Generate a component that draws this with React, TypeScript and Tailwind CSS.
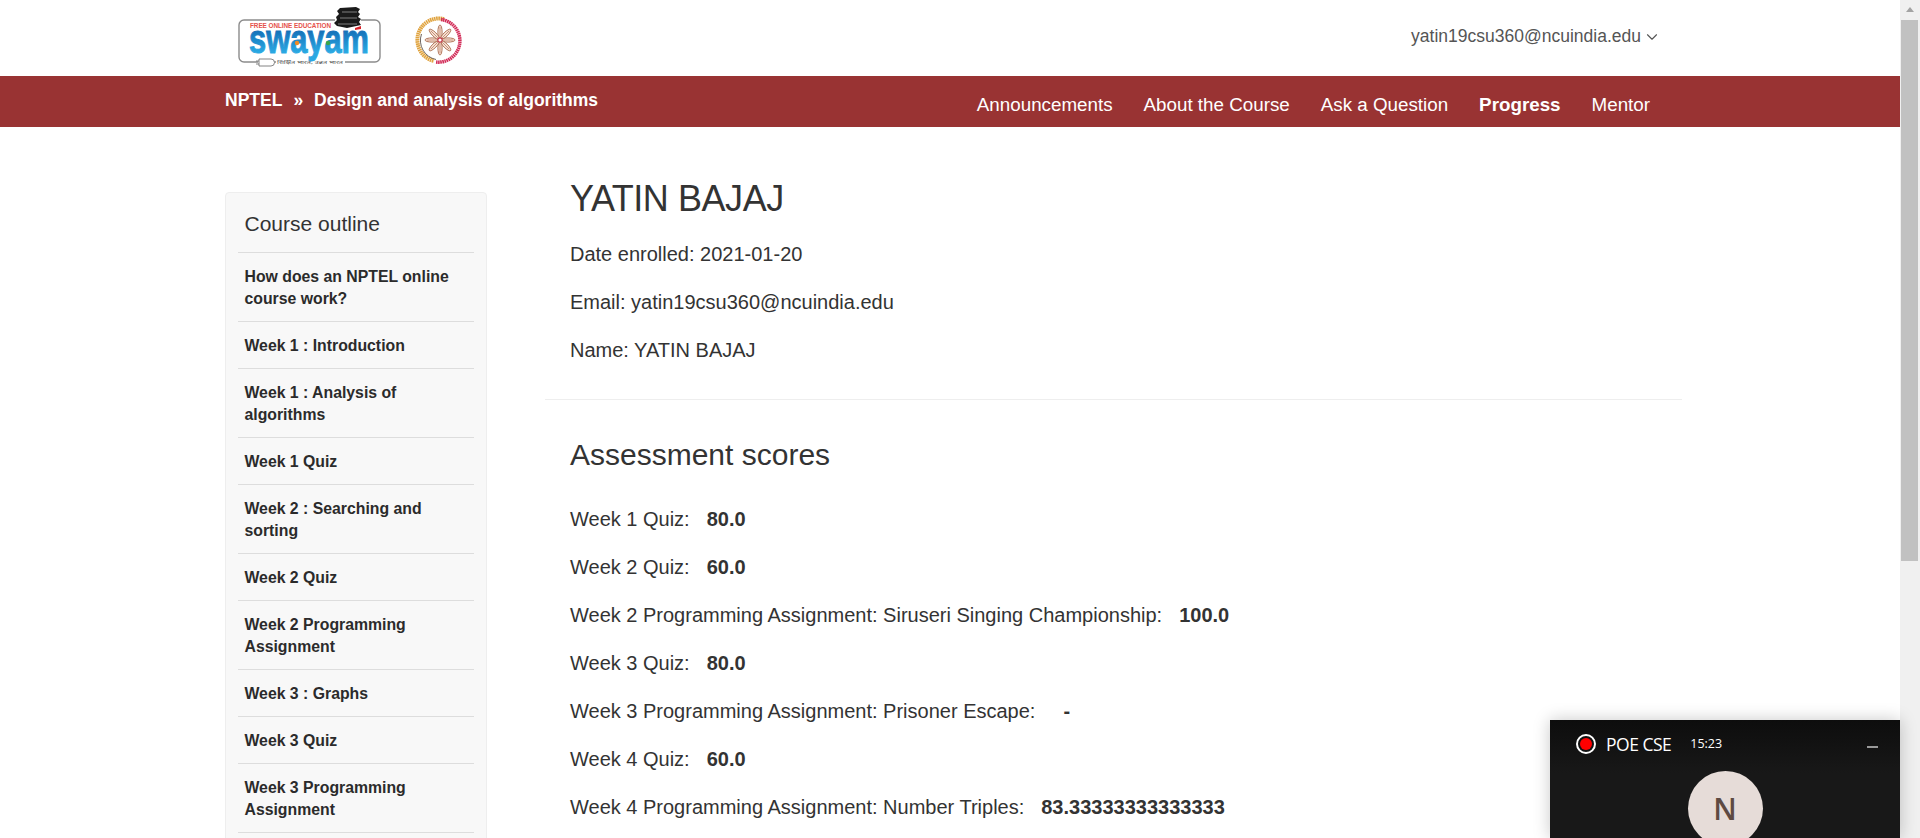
import React from "react";
import { ChevronDown } from "lucide-react";

const outline = [
  "How does an NPTEL online course work?",
  "Week 1 : Introduction",
  "Week 1 : Analysis of algorithms",
  "Week 1 Quiz",
  "Week 2 : Searching and sorting",
  "Week 2 Quiz",
  "Week 2 Programming Assignment",
  "Week 3 : Graphs",
  "Week 3 Quiz",
  "Week 3 Programming Assignment",
  "Week 4 : Weighted graphs",
];

const scores = [
  { name: "Week 1 Quiz:", score: "80.0" },
  { name: "Week 2 Quiz:", score: "60.0" },
  { name: "Week 2 Programming Assignment: Siruseri Singing Championship:", score: "100.0" },
  { name: "Week 3 Quiz:", score: "80.0" },
  { name: "Week 3 Programming Assignment: Prisoner Escape:", score: "-", wide: true },
  { name: "Week 4 Quiz:", score: "60.0" },
  { name: "Week 4 Programming Assignment: Number Triples:", score: "83.33333333333333" },
];

function SwayamLogo() {
  return (
    <svg width="146" height="66" viewBox="0 0 146 66" className="block">
      <defs>
        <linearGradient id="swayamBlue" x1="0" y1="0" x2="0" y2="1">
          <stop offset="0.2" stopColor="#0f62ae" />
          <stop offset="0.8" stopColor="#2aa8e2" />
        </linearGradient>
      </defs>
      <path d="M98 15H7a5 5 0 0 0-5 5v32a5 5 0 0 0 5 5h14M36 57h3M108 57h30a5 5 0 0 0 5-5V20a5 5 0 0 0-5-5h-14" fill="none" stroke="#8c8c8c" strokeWidth="1.4" />
      <path d="M22 54h12a3 3 0 0 1 0 7H22zM22 56h-3M22 59h-3" fill="#fff" stroke="#777" strokeWidth="0.9" />
      <path d="M103 3l16-1 4 2-2 3 2 2-2 3 3 2-2 3 2 3-14 3-10-2-3-3 3-3-1-3 3-3-2-3z" fill="#1a1a1a" />
      <path d="M105 7h15M103 13h17M101 19h19" stroke="#8a8a8a" strokeWidth="0.9" />
      <path d="M118 23l6-2v3l-6 1z" fill="#d8232a" />
      <text x="13" y="23" fontSize="6.4" fontWeight="700" fill="#e5524b" fontFamily="'Liberation Sans', sans-serif" textLength="81" lengthAdjust="spacing">FREE ONLINE EDUCATION</text>
      <text x="12" y="47.5" fontSize="40" fontWeight="700" fill="url(#swayamBlue)" stroke="url(#swayamBlue)" strokeWidth="1" fontFamily="'Liberation Sans', sans-serif" textLength="120" lengthAdjust="spacingAndGlyphs">swayam</text>
      <circle cx="60" cy="38" r="2.2" fill="#f08a24" />
      <circle cx="91" cy="38" r="2.2" fill="#3aa54a" />
      <text x="40" y="59" fontSize="5" fill="#555" fontFamily="'Noto Sans', 'Liberation Sans', sans-serif" textLength="66" lengthAdjust="spacingAndGlyphs">शिक्षित भारत, उन्नत भारत</text>
    </svg>
  );
}

function NptelSeal() {
  const petals = [0, 45, 90, 135, 180, 225, 270, 315];
  return (
    <svg width="50" height="50" viewBox="0 0 50 50" className="mt-[3px] block">
      <path d="M29 4A21.5 21.5 0 0 0 19 46" fill="none" stroke="#e0a33e" strokeWidth="4" strokeDasharray="1.6 0.5" />
      <path d="M6.5 19A19.5 19.5 0 0 0 21 44.5" fill="none" stroke="#4b4038" strokeWidth="0.8" />
      <path d="M26 4.5A21 21 0 0 1 21 47" fill="none" stroke="#d22c58" strokeWidth="3.5" strokeDasharray="1.6 0.5" />
      {petals.map((deg) => (
        <g key={deg} transform={`rotate(${deg} 25 25)`}>
          <ellipse cx="25" cy="17" rx="2.1" ry="7" fill="#f6e7d8" stroke="#a9684c" strokeWidth="0.9" />
          <path d="M25 12v10" stroke="#b5553f" strokeWidth="0.6" />
        </g>
      ))}
      <circle cx="25" cy="25" r="2.2" fill="#fff" stroke="#c23a4a" strokeWidth="1.2" />
    </svg>
  );
}

export default function App() {
  return (
    <div className="flex h-[838px] w-full overflow-hidden bg-white text-[#333] font-['Liberation_Sans',Arial,sans-serif]">
      <div className="relative w-[1900px] shrink-0">
        <header className="flex h-[76px] items-center justify-between pl-[237px] pr-[239px]">
          <div className="flex items-center gap-[32px]">
            <SwayamLogo />
            <NptelSeal />
          </div>
          <div className="flex items-center gap-[2px] pb-[3px] text-[17.5px] text-[#555]">
            yatin19csu360@ncuindia.edu
            <ChevronDown size={18} strokeWidth={1.5} />
          </div>
        </header>

        <nav className="flex h-[51px] items-start justify-between bg-[#993333] pl-[225px] pr-[250px] text-white">
          <div className="flex gap-[11px] pt-[13px] text-[17.5px] font-bold leading-[22px]">
            <span>NPTEL</span>
            <span>»</span>
            <span>Design and analysis of algorithms</span>
          </div>
          <ul className="flex gap-[31px] pt-[17px] text-[18.8px] leading-[24px]">
            <li>Announcements</li>
            <li>About the Course</li>
            <li>Ask a Question</li>
            <li className="font-bold">Progress</li>
            <li>Mentor</li>
          </ul>
        </nav>

        <div className="flex items-start pl-[225px] pt-[51px]">
          <aside className="mt-[14px] w-[262px] shrink-0 rounded border border-[#eeeeee] bg-[#f8f8f8] px-[12px]">
            <h3 className="pl-[6.5px] pb-[17px] pt-[20px] text-[21px] leading-[22px] text-[#333]">Course outline</h3>
            <ul>
              {outline.map((item) => (
                <li key={item} className="border-t border-[#dddddd] pb-[11px] pl-[6.5px] pr-[7px] pt-[13px] text-[15.8px] font-bold leading-[22px] text-[#2b2b2b]">
                  {item}
                </li>
              ))}
            </ul>
          </aside>

          <main className="ml-[58px] w-[1137px]">
            <div className="border-b border-[#eeeeee] px-[25px] pb-[37px]">
              <h1 className="mb-[23px] pt-[1px] text-[36px] leading-[40px] tracking-[-0.45px]">YATIN BAJAJ</h1>
              <p className="mb-[24px] text-[20px] leading-[24px]">Date enrolled: 2021-01-20</p>
              <p className="mb-[24px] text-[20px] leading-[24px]">Email: yatin19csu360@ncuindia.edu</p>
              <p className="text-[20px] leading-[24px]">Name: YATIN BAJAJ</p>
            </div>
            <div className="px-[25px] pt-[37px]">
              <h2 className="mb-[34px] text-[30px] leading-[36px]">Assessment scores</h2>
              {scores.map((row) => (
                <p key={row.name} className="mb-[24px] flex gap-[17px] text-[20px] leading-[24px]">
                  <span>{row.name}</span>
                  <b className={row.wide ? "ml-[11px]" : ""}>{row.score}</b>
                </p>
              ))}
            </div>
          </main>
        </div>

        <div className="absolute bottom-0 right-0 h-[118px] w-[350px] bg-[linear-gradient(#0d0d0d,#181818_45%)] shadow-[0_0_16px_rgba(0,0,0,0.22)] font-['Open_Sans',sans-serif]">
          <div className="flex items-center pl-[26px] pr-[22px] pt-[11px] text-white">
            <span className="flex h-5 w-5 items-center justify-center rounded-full border-2 border-white">
              <span className="h-3 w-3 rounded-full bg-[#ff0000]" />
            </span>
            <span className="ml-[10px] text-[17.5px] tracking-[-0.5px]">POE CSE</span>
            <span className="ml-[19px] text-[12.5px]">15:23</span>
            <span className="ml-auto mt-[6px] h-[1.5px] w-[11px] bg-[#999999]" />
          </div>
          <div className="mx-auto mt-[14px] flex h-[75px] w-[75px] items-center justify-center rounded-full bg-[#e6dcd8] pb-[1px] text-[30px] font-semibold text-[#5e4a42]">
            N
          </div>
        </div>
      </div>

      <div className="flex w-5 shrink-0 flex-col items-center bg-[#f0f0f0] pl-[1px] pr-[2px]">
        <span className="mt-[7px] h-0 w-0 border-x-[4px] border-b-[5px] border-x-transparent border-b-[#a3a3a3]" />
        <span className="mt-[8px] h-[541px] w-full bg-[#c1c1c1]" />
      </div>
    </div>
  );
}
